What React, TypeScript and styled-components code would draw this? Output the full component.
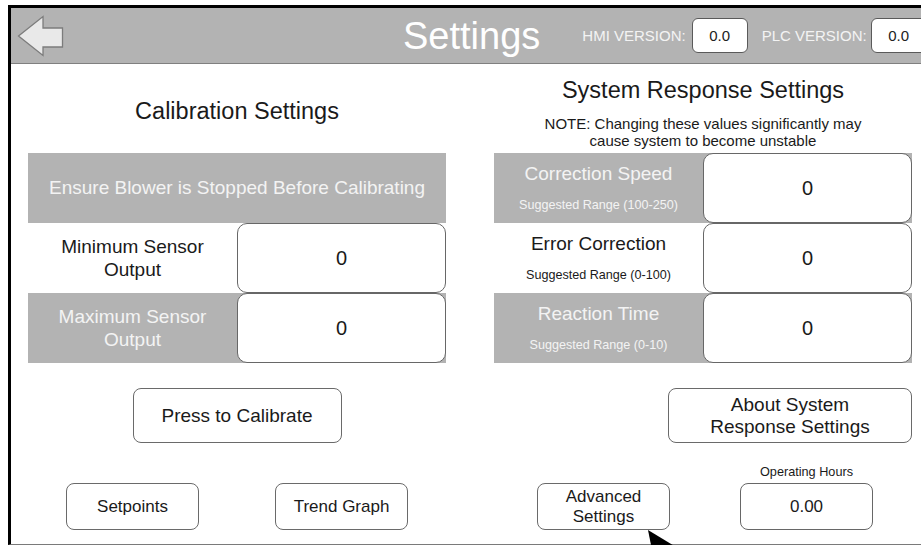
import React from "react";
import styled, { createGlobalStyle } from "styled-components";

const Global = createGlobalStyle`
  html, body { margin: 0; padding: 0; background: #fff; overflow: hidden; }
  body { font-family: "Liberation Sans", Arial, sans-serif; color: #1a1a1a; }
  * { box-sizing: border-box; }
`;

const GRAY = "#b3b3b3";
const LIGHT = "#f3f3f3";

const Frame = styled.div`
  position: relative;
  margin: 5px 0 0 8px;
  width: 930px;
  height: 540px;
  border-top: 3px solid #000;
  border-left: 3px solid #000;
  border-bottom: 1px solid #7a7a7a;
  display: flex;
  flex-direction: column;
`;

const Header = styled.header`
  height: 56px;
  flex: none;
  background: ${GRAY};
  border-bottom: 1px solid #808080;
  display: flex;
  align-items: center;
  padding-left: 6px;
`;

const BackArrow = styled.svg`
  width: 47px;
  height: 42px;
  flex: none;
`;

const Title = styled.h1`
  margin: 0 0 0 339px;
  font-size: 38px;
  font-weight: 400;
  color: #fff;
  line-height: 44px;
  white-space: nowrap;
`;

const VersionLabel = styled.span<{ $gap: number }>`
  margin-left: ${(p) => p.$gap}px;
  font-size: 15px;
  color: ${LIGHT};
  white-space: nowrap;
`;

const VersionBox = styled.div<{ $gap: number }>`
  margin-left: ${(p) => p.$gap}px;
  width: 56px;
  height: 35px;
  flex: none;
  background: #fff;
  border: 1.5px solid #5a5a5a;
  border-radius: 6px;
  display: flex;
  align-items: center;
  justify-content: center;
  font-size: 15px;
  color: #222;
`;

const Content = styled.main`
  flex: 1;
  display: grid;
  grid-template-columns: 418px 418px;
  column-gap: 48px;
  padding-left: 17px;
`;

const Column = styled.section`
  display: flex;
  flex-direction: column;
`;

const TitleBlock = styled.div<{ $top: number }>`
  height: 89px;
  padding-top: ${(p) => p.$top}px;
  display: flex;
  flex-direction: column;
  align-items: center;
`;

const SectionTitle = styled.h2`
  margin: 0;
  font-size: 23.5px;
  font-weight: 400;
  line-height: 27px;
  color: #1a1a1a;
  white-space: nowrap;
`;

const Note = styled.p`
  margin: 12px 0 0;
  font-size: 15px;
  line-height: 16.5px;
  text-align: center;
  color: #1a1a1a;
`;

const Table = styled.div`
  display: flex;
  flex-direction: column;
`;

const Band = styled.div<{ $gray?: boolean }>`
  height: 70px;
  display: grid;
  grid-template-columns: 1fr 1fr;
  background: ${(p) => (p.$gray ? GRAY : "#fff")};
  color: ${(p) => (p.$gray ? LIGHT : "#1a1a1a")};
`;

const FullBand = styled.div`
  height: 70px;
  background: ${GRAY};
  color: ${LIGHT};
  display: flex;
  align-items: center;
  justify-content: center;
  font-size: 19px;
  white-space: nowrap;
`;

const Label = styled.div`
  display: flex;
  flex-direction: column;
  align-items: center;
  justify-content: center;
  text-align: center;
  font-size: 19px;
  line-height: 23px;
`;

const LabelMain = styled.div`
  font-size: 19px;
  line-height: 22px;
  white-space: nowrap;
`;

const LabelSub = styled.div`
  margin-top: 13px;
  font-size: 12.6px;
  line-height: 15px;
  white-space: nowrap;
`;

const ValueBox = styled.div`
  background: #fff;
  border: 1.5px solid #676767;
  border-radius: 10px;
  display: flex;
  align-items: center;
  justify-content: center;
  font-size: 20px;
  color: #1a1a1a;
`;

const ActionRow = styled.div<{ $align: string }>`
  margin-top: 25px;
  display: flex;
  justify-content: ${(p) => p.$align};
`;

const Button = styled.button<{ $w: number; $h: number; $size: number }>`
  width: ${(p) => p.$w}px;
  height: ${(p) => p.$h}px;
  flex: none;
  padding: 0;
  background: #fff;
  border: 1.5px solid #6a6a6a;
  border-radius: 8px;
  font-family: "Liberation Sans", Arial, sans-serif;
  font-size: ${(p) => p.$size}px;
  line-height: ${(p) => Math.round(p.$size * 1.17)}px;
  color: #1a1a1a;
  text-align: center;
`;

const BottomGrid = styled.div`
  margin-top: 40px;
  display: grid;
  grid-template-columns: 1fr 1fr;
  justify-items: center;
`;

const BottomFlex = styled.div`
  margin-top: 22px;
  display: flex;
  align-items: flex-end;
  padding-left: 43px;
`;

const HoursGroup = styled.div`
  margin-left: 70px;
  display: flex;
  flex-direction: column;
  align-items: center;
`;

const HoursLabel = styled.div`
  font-size: 12.7px;
  line-height: 14px;
  margin-bottom: 4px;
  color: #1a1a1a;
`;

const HoursBox = styled(ValueBox)`
  width: 133px;
  height: 47px;
  border-radius: 8px;
  font-size: 17px;
`;

const Cursor = styled.svg`
  position: absolute;
  left: 637px;
  top: 522px;
  width: 34px;
  height: 20px;
`;

export default function App() {
  return (
    <>
      <Global />
      <Frame>
        <Header>
          <BackArrow viewBox="0 0 47 42">
            <polygon
              points="1.5,21 26,1.5 26,13 45.5,13 45.5,32 26,32 26,40.5"
              fill="#e9e9e9"
              stroke="#7c7c7c"
              strokeWidth="1.3"
              strokeLinejoin="miter"
            />
          </BackArrow>
          <Title>Settings</Title>
          <VersionLabel $gap={42}>HMI VERSION:</VersionLabel>
          <VersionBox $gap={6}>0.0</VersionBox>
          <VersionLabel $gap={14}>PLC VERSION:</VersionLabel>
          <VersionBox $gap={4}>0.0</VersionBox>
        </Header>
        <Content>
          <Column>
            <TitleBlock $top={34}>
              <SectionTitle>Calibration Settings</SectionTitle>
            </TitleBlock>
            <Table>
              <FullBand>Ensure Blower is Stopped Before Calibrating</FullBand>
              <Band>
                <Label>
                  Minimum Sensor
                  <br />
                  Output
                </Label>
                <ValueBox>0</ValueBox>
              </Band>
              <Band $gray>
                <Label>
                  Maximum Sensor
                  <br />
                  Output
                </Label>
                <ValueBox>0</ValueBox>
              </Band>
            </Table>
            <ActionRow $align="center">
              <Button $w={209} $h={55} $size={19}>
                Press to Calibrate
              </Button>
            </ActionRow>
            <BottomGrid>
              <Button $w={133} $h={47} $size={17}>
                Setpoints
              </Button>
              <Button $w={133} $h={47} $size={17}>
                Trend Graph
              </Button>
            </BottomGrid>
          </Column>
          <Column>
            <TitleBlock $top={13}>
              <SectionTitle>System Response Settings</SectionTitle>
              <Note>
                NOTE: Changing these values significantly may
                <br />
                cause system to become unstable
              </Note>
            </TitleBlock>
            <Table>
              <Band $gray>
                <Label>
                  <LabelMain>Correction Speed</LabelMain>
                  <LabelSub>Suggested Range (100-250)</LabelSub>
                </Label>
                <ValueBox>0</ValueBox>
              </Band>
              <Band>
                <Label>
                  <LabelMain>Error Correction</LabelMain>
                  <LabelSub>Suggested Range (0-100)</LabelSub>
                </Label>
                <ValueBox>0</ValueBox>
              </Band>
              <Band $gray>
                <Label>
                  <LabelMain>Reaction Time</LabelMain>
                  <LabelSub>Suggested Range (0-10)</LabelSub>
                </Label>
                <ValueBox>0</ValueBox>
              </Band>
            </Table>
            <ActionRow $align="flex-end">
              <Button $w={244} $h={55} $size={19}>
                About System
                <br />
                Response Settings
              </Button>
            </ActionRow>
            <BottomFlex>
              <Button $w={133} $h={47} $size={17}>
                Advanced
                <br />
                Settings
              </Button>
              <HoursGroup>
                <HoursLabel>Operating Hours</HoursLabel>
                <HoursBox>0.00</HoursBox>
              </HoursGroup>
            </BottomFlex>
          </Column>
        </Content>
        <Cursor viewBox="0 0 34 20">
          <polygon points="0,0 4,20 33,20" fill="#000" />
        </Cursor>
      </Frame>
    </>
  );
}
